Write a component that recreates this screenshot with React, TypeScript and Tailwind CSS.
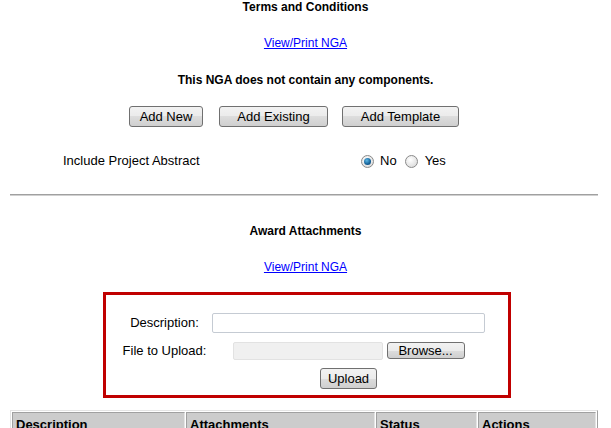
import React from "react";

const font = { fontFamily: '"Liberation Sans", Arial, sans-serif' };

function Btn({ children, className = "" }: { children: React.ReactNode; className?: string }) {
  return (
    <button
      className={
        "h-[21px] rounded-[3px] border border-[#707070] bg-[linear-gradient(#f2f2f2_0%,#ebebeb_50%,#dddddd_50%,#cfcfcf_100%)] text-[13px] leading-[19px] text-black " +
        className
      }
    >
      {children}
    </button>
  );
}

function Radio({ checked }: { checked?: boolean }) {
  return (
    <span className="flex h-[13px] w-[13px] items-center justify-center rounded-full border border-[#8a8a8a] bg-[radial-gradient(circle_at_40%_35%,#ffffff,#d4d4d4)]">
      {checked && (
        <span className="h-[7px] w-[7px] rounded-full bg-[radial-gradient(circle_at_40%_35%,#5cb8e6,#135f96_60%,#0a3f6b)]" />
      )}
    </span>
  );
}

export default function App() {
  return (
    <div style={font} className="w-[611px] h-[428px] overflow-hidden bg-white text-black">
      <div className="text-center text-[12px] font-bold leading-[14px]">Terms and Conditions</div>
      <div className="mt-[22px] text-center text-[12px] leading-[14px]">
        <a href="#" className="text-[#0000ff] underline">View/Print NGA</a>
      </div>
      <div className="mt-[23px] text-center text-[12px] font-bold leading-[14px]">
        This NGA does not contain any components.
      </div>
      <div className="mt-[19px] flex pl-[129px]">
        <Btn className="w-[74px]">Add New</Btn>
        <Btn className="ml-[16px] w-[109px]">Add Existing</Btn>
        <Btn className="ml-[14px] w-[117px]">Add Template</Btn>
      </div>
      <div className="mt-[26px] flex h-[16px] items-center text-[13px] leading-[16px]">
        <span className="ml-[63px] w-[298px]">Include Project Abstract</span>
        <Radio checked />
        <span className="ml-[6px]">No</span>
        <span className="ml-[8px]"><Radio /></span>
        <span className="ml-[7px]">Yes</span>
      </div>
      <div className="ml-[10px] mt-[25px] h-[2px] w-[588px] border-t border-t-[#a0a0a0] border-b border-b-[#d0d0d0]" />
      <div className="mt-[28px] text-center text-[12px] font-bold leading-[14px]">Award Attachments</div>
      <div className="mt-[22px] text-center text-[12px] leading-[14px]">
        <a href="#" className="text-[#0000ff] underline">View/Print NGA</a>
      </div>
      <div className="ml-[103px] mt-[18px] h-[106px] w-[408px] border-[3px] border-[#c00000] pt-[18px]">
        <div className="grid grid-cols-[95px_273px] ml-[11px] gap-y-[8px] text-[13px]">
          <div className="flex items-center justify-center">Description:</div>
          <div>
            <div className="h-[20px] w-[273px] rounded-[2px] border border-[#c5cbd3] bg-white" />
          </div>
          <div className="flex items-center justify-center">File to Upload:</div>
          <div className="flex items-center justify-center gap-[4px]">
            <div className="h-[18px] w-[150px] rounded-[2px] border border-[#e2e2e2] bg-[#f0f0f0]" />
            <Btn className="!h-[17px] w-[78px] !leading-[15px]">Browse...</Btn>
          </div>
          <div />
          <div className="-mt-[1px] flex justify-center">
            <Btn className="w-[57px]">Upload</Btn>
          </div>
        </div>
      </div>
      <div className="ml-[10px] mt-[12px] w-[588px] border border-t-[#e4e4e4] border-l-[#e4e4e4] border-r-[#a0a0a0] border-b-[#a0a0a0] p-[1px]">
        <div className="flex gap-[1px] text-[13px] font-bold">
          <div className="h-[20px] w-[173px] border border-t-[#a0a0a0] border-l-[#a0a0a0] border-r-[#e4e4e4] border-b-[#e4e4e4] bg-[#cccccc] pl-[3px] pt-[4px] leading-[15px]">Description</div>
          <div className="h-[20px] w-[189px] border border-t-[#a0a0a0] border-l-[#a0a0a0] border-r-[#e4e4e4] border-b-[#e4e4e4] bg-[#cccccc] pl-[3px] pt-[4px] leading-[15px]">Attachments</div>
          <div className="h-[20px] w-[101px] border border-t-[#a0a0a0] border-l-[#a0a0a0] border-r-[#e4e4e4] border-b-[#e4e4e4] bg-[#cccccc] pl-[3px] pt-[4px] leading-[15px]">Status</div>
          <div className="h-[20px] flex-1 border border-t-[#a0a0a0] border-l-[#a0a0a0] border-r-[#e4e4e4] border-b-[#e4e4e4] bg-[#cccccc] pl-[3px] pt-[4px] leading-[15px]">Actions</div>
        </div>
      </div>
    </div>
  );
}
